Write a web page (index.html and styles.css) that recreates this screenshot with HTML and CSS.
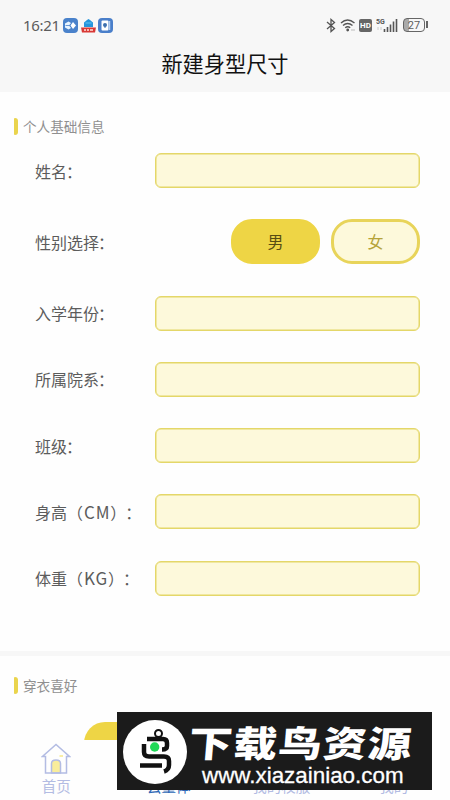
FILE: index.html
```html
<!DOCTYPE html>
<html lang="zh-CN">
<head>
    <meta charset="UTF-8">
    <title>新建身型尺寸</title>
    <link rel="stylesheet" href="styles.css">
</head>
<body>
    <header class="header">
        <div class="status-bar">
            <span class="time">16:21</span>
            <svg class="app-icon" width="15" height="15" viewBox="0 0 15 15">
                <rect width="15" height="15" rx="4" fill="#4a82cb"/>
                <path d="M2 5.500L5.500 3.500 8 5 6 7.500 8 10l-2.500 1.500L2 9.500z" fill="#e9f5ff"/>
                <path d="M2.500 7.500h4" stroke="#4a82cb" stroke-width=".8"/>
                <path d="M10 4l3 3.500-3 3.500-2.500-3.500z" fill="#fff"/>
            </svg>
            <svg class="app-icon" width="15" height="15" viewBox="0 0 15 15">
                <path d="M3 9V4.500L6 2l1.500-1L9 2l3 2.500V9z" fill="#2595dc"/>
                <path d="M4.500 5h6" stroke="#61c4f4"/>
                <path d="M0 9.500h15L14 14.500H1z" fill="#d93936"/>
                <path d="M3 12h2m1 0h2m1 0h3" stroke="#ffe2dc" stroke-width="1.500"/>
            </svg>
            <svg class="app-icon" width="15" height="15" viewBox="0 0 15 15">
                <rect width="15" height="15" rx="4" fill="#4a7fca"/>
                <rect x="3.500" y="2.500" width="7" height="10" rx="1" fill="#fff"/>
                <path d="M11.700 3v9" stroke="#cfe2fa"/>
                <circle cx="7" cy="7" r="2" fill="#3d6fae"/>
                <path d="M7 8v2" stroke="#3d6fae"/>
            </svg>
            <div class="status-right">
                <svg width="10" height="15" viewBox="0 0 10 15" fill="none" stroke="#555" stroke-width="1.300">
                    <path d="M1 4l7.500 6.500L5 13.500v-12L8.500 4.500 1 11"/>
                </svg>
                <svg class="wifi" width="16" height="14" viewBox="0 0 16 14" fill="none" stroke="#555" stroke-width="1.400">
                    <path d="M1 5Q7.500-1 14.500 5M3 7.500q4.500-4 9.500 0M5.200 9.800q2.500-2 5 0"/>
                    <circle cx="7.700" cy="12" r=".7" fill="#555"/>
                    <path d="M11 12h4" stroke="#ccc"/>
                </svg>
                <span class="hd">HD</span>
                <svg class="signal" width="22" height="15" viewBox="0 0 22 15">
                    <text x="0" y="6" class="signal-text">5G</text>
                    <path d="M2 9v3M5 9v3" stroke="#ccc"/>
                    <path d="M8.500 11v3M11.500 9v5M14.500 6.500V14M17.500 3.500V14M20.500 1v13" stroke="#555" stroke-width="1.600"/>
                </svg>
                <span class="battery">27</span>
            </div>
        </div>
        <h1 class="title">新建身型尺寸</h1>
    </header>

    <main>
        <section class="section">
            <h2 class="section-title">个人基础信息</h2>
            <div class="row">
                <label for="name">姓名<span class="colon">：</span></label>
                <input id="name" class="field" type="text">
            </div>
            <div class="row row-gender">
                <span>性别选择<span class="colon">：</span></span>
                <div class="choices">
                    <button class="choice active">男</button>
                    <button class="choice">女</button>
                </div>
            </div>
            <div class="row">
                <label for="year">入学年份<span class="colon">：</span></label>
                <input id="year" class="field" type="text">
            </div>
            <div class="row">
                <label for="college">所属院系<span class="colon">：</span></label>
                <input id="college" class="field" type="text">
            </div>
            <div class="row">
                <label for="class">班级<span class="colon">：</span></label>
                <input id="class" class="field" type="text">
            </div>
            <div class="row">
                <label for="height">身高（<span class="unit">CM</span>）<span class="colon">：</span></label>
                <input id="height" class="field" type="text">
            </div>
            <div class="row">
                <label for="weight">体重（<span class="unit">KG</span>）<span class="colon">：</span></label>
                <input id="weight" class="field" type="text">
            </div>
        </section>

        <section class="section section-style">
            <h2 class="section-title">穿衣喜好</h2>
            <div class="style-option"></div>
        </section>
    </main>

    <nav class="tab-bar">
        <a class="tab">
            <svg width="30" height="32" viewBox="0 0 30 32" fill="none" stroke="#b3bce3" stroke-width="1.500">
                <path d="M10.500 30V20.500q0-3.500 4.500-3.500t4.500 3.500V30z" fill="#f9ed9b"/>
                <path d="M4.500 13.500h-3L15 1.500l13.500 12h-3V30h-21z"/>
                <path d="M18.500 13h3.500" stroke="#f7e88a"/>
            </svg>
            首页
        </a>
        <a class="tab current">云量体</a>
        <a class="tab">我的校服</a>
        <a class="tab">我的</a>
    </nav>

    <div class="watermark">
        <svg class="watermark-logo" width="64" height="64" viewBox="0 0 64 64">
            <circle cx="32" cy="32" r="32" fill="#fff"/>
            <g fill="none" stroke="#111" stroke-width="4.500">
                <circle cx="35.500" cy="13.500" r="3.500" stroke-width="2"/>
                <path d="M24 19h16q4 0 4 4v3q0 3.500-5 3.500"/>
                <path d="M21 24v8q0 4.500 5 4.500h15q5 0 5 4.500v4q0 5-5 6.500"/>
                <path d="M17 45.500h22"/>
            </g>
            <circle cx="31.700" cy="27" r="4.700" fill="#20d957"/>
        </svg>
        <div class="watermark-text">
            <strong>下载鸟资源</strong>
            <span>www.xiazainiao.com</span>
        </div>
    </div>
</body>
</html>
```
FILE: styles.css
```css
* {
    box-sizing: border-box;
}
body {
    margin: 0;
    height: 800px;
    overflow: hidden;
    background: #fefefe;
    color: #5c5c5c;
    font-family: "Noto Sans CJK SC", sans-serif;
    text-spacing-trim: space-all;
}
main {
    height: 708px;
    overflow: hidden;
}
.header {
    height: 92px;
    padding-top: 15px;
    background: #f7f7f7;
}
.status-bar {
    display: flex;
    align-items: center;
    height: 20px;
    padding: 0 21px 0 23px;
}
.time {
    width: 40px;
    font: 15px/20px "Noto Sans", sans-serif;
    letter-spacing: -.3px;
}
.app-icon {
    margin-right: 2.5px;
}
.status-right {
    display: flex;
    align-items: center;
    margin-left: auto;
}
.wifi {
    margin-left: 4px;
}
.hd {
    width: 13px;
    height: 13px;
    margin-left: 3px;
    border-radius: 2px;
    background: #666;
    color: #fff;
    font: bold 8px/13px Roboto, sans-serif;
    text-align: center;
}
.signal {
    margin-left: 4px;
}
.signal-text {
    font: bold 7px Roboto, sans-serif;
    fill: #555;
}
.battery {
    position: relative;
    width: 22px;
    height: 14px;
    margin: 0 4px 0 5px;
    border: 1.5px solid #666;
    border-radius: 4px;
    background: linear-gradient(90deg, #aaa 5px, transparent 5px);
    font: 11px/13px Roboto, sans-serif;
    text-align: center;
}
.battery::after {
    content: "";
    position: absolute;
    top: 2px;
    right: -4px;
    width: 2px;
    height: 7px;
    background: #666;
}
.title {
    margin: 10px 0 0;
    color: #111;
    font-size: 21.2px;
    font-weight: 400;
    line-height: 36px;
    text-align: center;
}
.section {
    height: 564px;
    padding: 26px 30px 0 35px;
    border-bottom: 5px solid #f7f7f7;
}
.section-title {
    display: flex;
    align-items: center;
    height: 17px;
    margin: 0 0 18px -21px;
    color: #909090;
    font-size: 13.6px;
    font-weight: 400;
    line-height: 15px;
}
.section-title::before {
    content: "";
    width: 4px;
    height: 17px;
    margin-right: 5px;
    border-radius: 1px 3px 3px 1px;
    background: #ead44d;
}
.row {
    display: flex;
    align-items: center;
    justify-content: space-between;
    height: 35px;
    margin-bottom: 31.25px;
    font-size: 16px;
    white-space: nowrap;
}
.row-gender {
    height: 45px;
}
.colon {
    display: inline-block;
    margin-left: -1px;
}
.unit {
    display: inline-block;
    margin-left: 1px;
    font-size: 17px;
    letter-spacing: .8px;
    line-height: 20px;
}
.field {
    width: 265px;
    height: 35px;
    border: 1px solid #e4d769;
    border-radius: 6px;
    outline: none;
    background: #fdf9db;
    box-shadow: inset 0 0 0 .5px #e4d769;
}
.choices {
    display: flex;
    gap: 11px;
}
.choice {
    width: 89px;
    height: 45px;
    padding: 0 0 1px;
    border: 3px solid #e8d45a;
    border-radius: 21px;
    background: #fdf9db;
    color: #b5a339;
    font: 16px "Noto Sans CJK SC", sans-serif;
}
.choice.active {
    border-color: #eed545;
    background: #eed545;
    color: #574d13;
}
.section-style {
    padding-top: 21px;
    border: none;
}
.style-option {
    width: 89px;
    height: 45px;
    margin: 28px 0 0 49px;
    border-radius: 21px;
    background: #eed545;
}
.tab-bar {
    position: fixed;
    left: 0;
    right: 0;
    bottom: 0;
    display: flex;
    height: 60px;
    background: #fefefe;
}
.tab {
    display: flex;
    flex: 1;
    flex-direction: column;
    align-items: center;
    justify-content: flex-end;
    padding-bottom: 4px;
    color: #b3bce3;
    font-size: 14.5px;
    line-height: 21px;
}
.tab.current {
    color: #2d67b5;
}
.watermark {
    position: fixed;
    top: 712px;
    left: 117px;
    display: flex;
    width: 315px;
    height: 78px;
    padding: 8px 0 0 6px;
    background: #1b1b1b;
    color: #fff;
}
.watermark-logo {
    flex: none;
}
.watermark-text {
    display: flex;
    flex-direction: column;
    align-items: flex-start;
    margin-left: 2px;
    white-space: nowrap;
}
.watermark-text strong {
    font-size: 36px;
    font-weight: 900;
    letter-spacing: 1px;
    line-height: 46px;
    transform: translateY(-2px) scaleX(1.21) skewX(-4deg);
    transform-origin: 0 50%;
}
.watermark-text span {
    margin: -1px 0 0 13px;
    font: 22.4px/22px "Liberation Sans", sans-serif;
    -webkit-text-stroke: .3px #fff;
}
```
